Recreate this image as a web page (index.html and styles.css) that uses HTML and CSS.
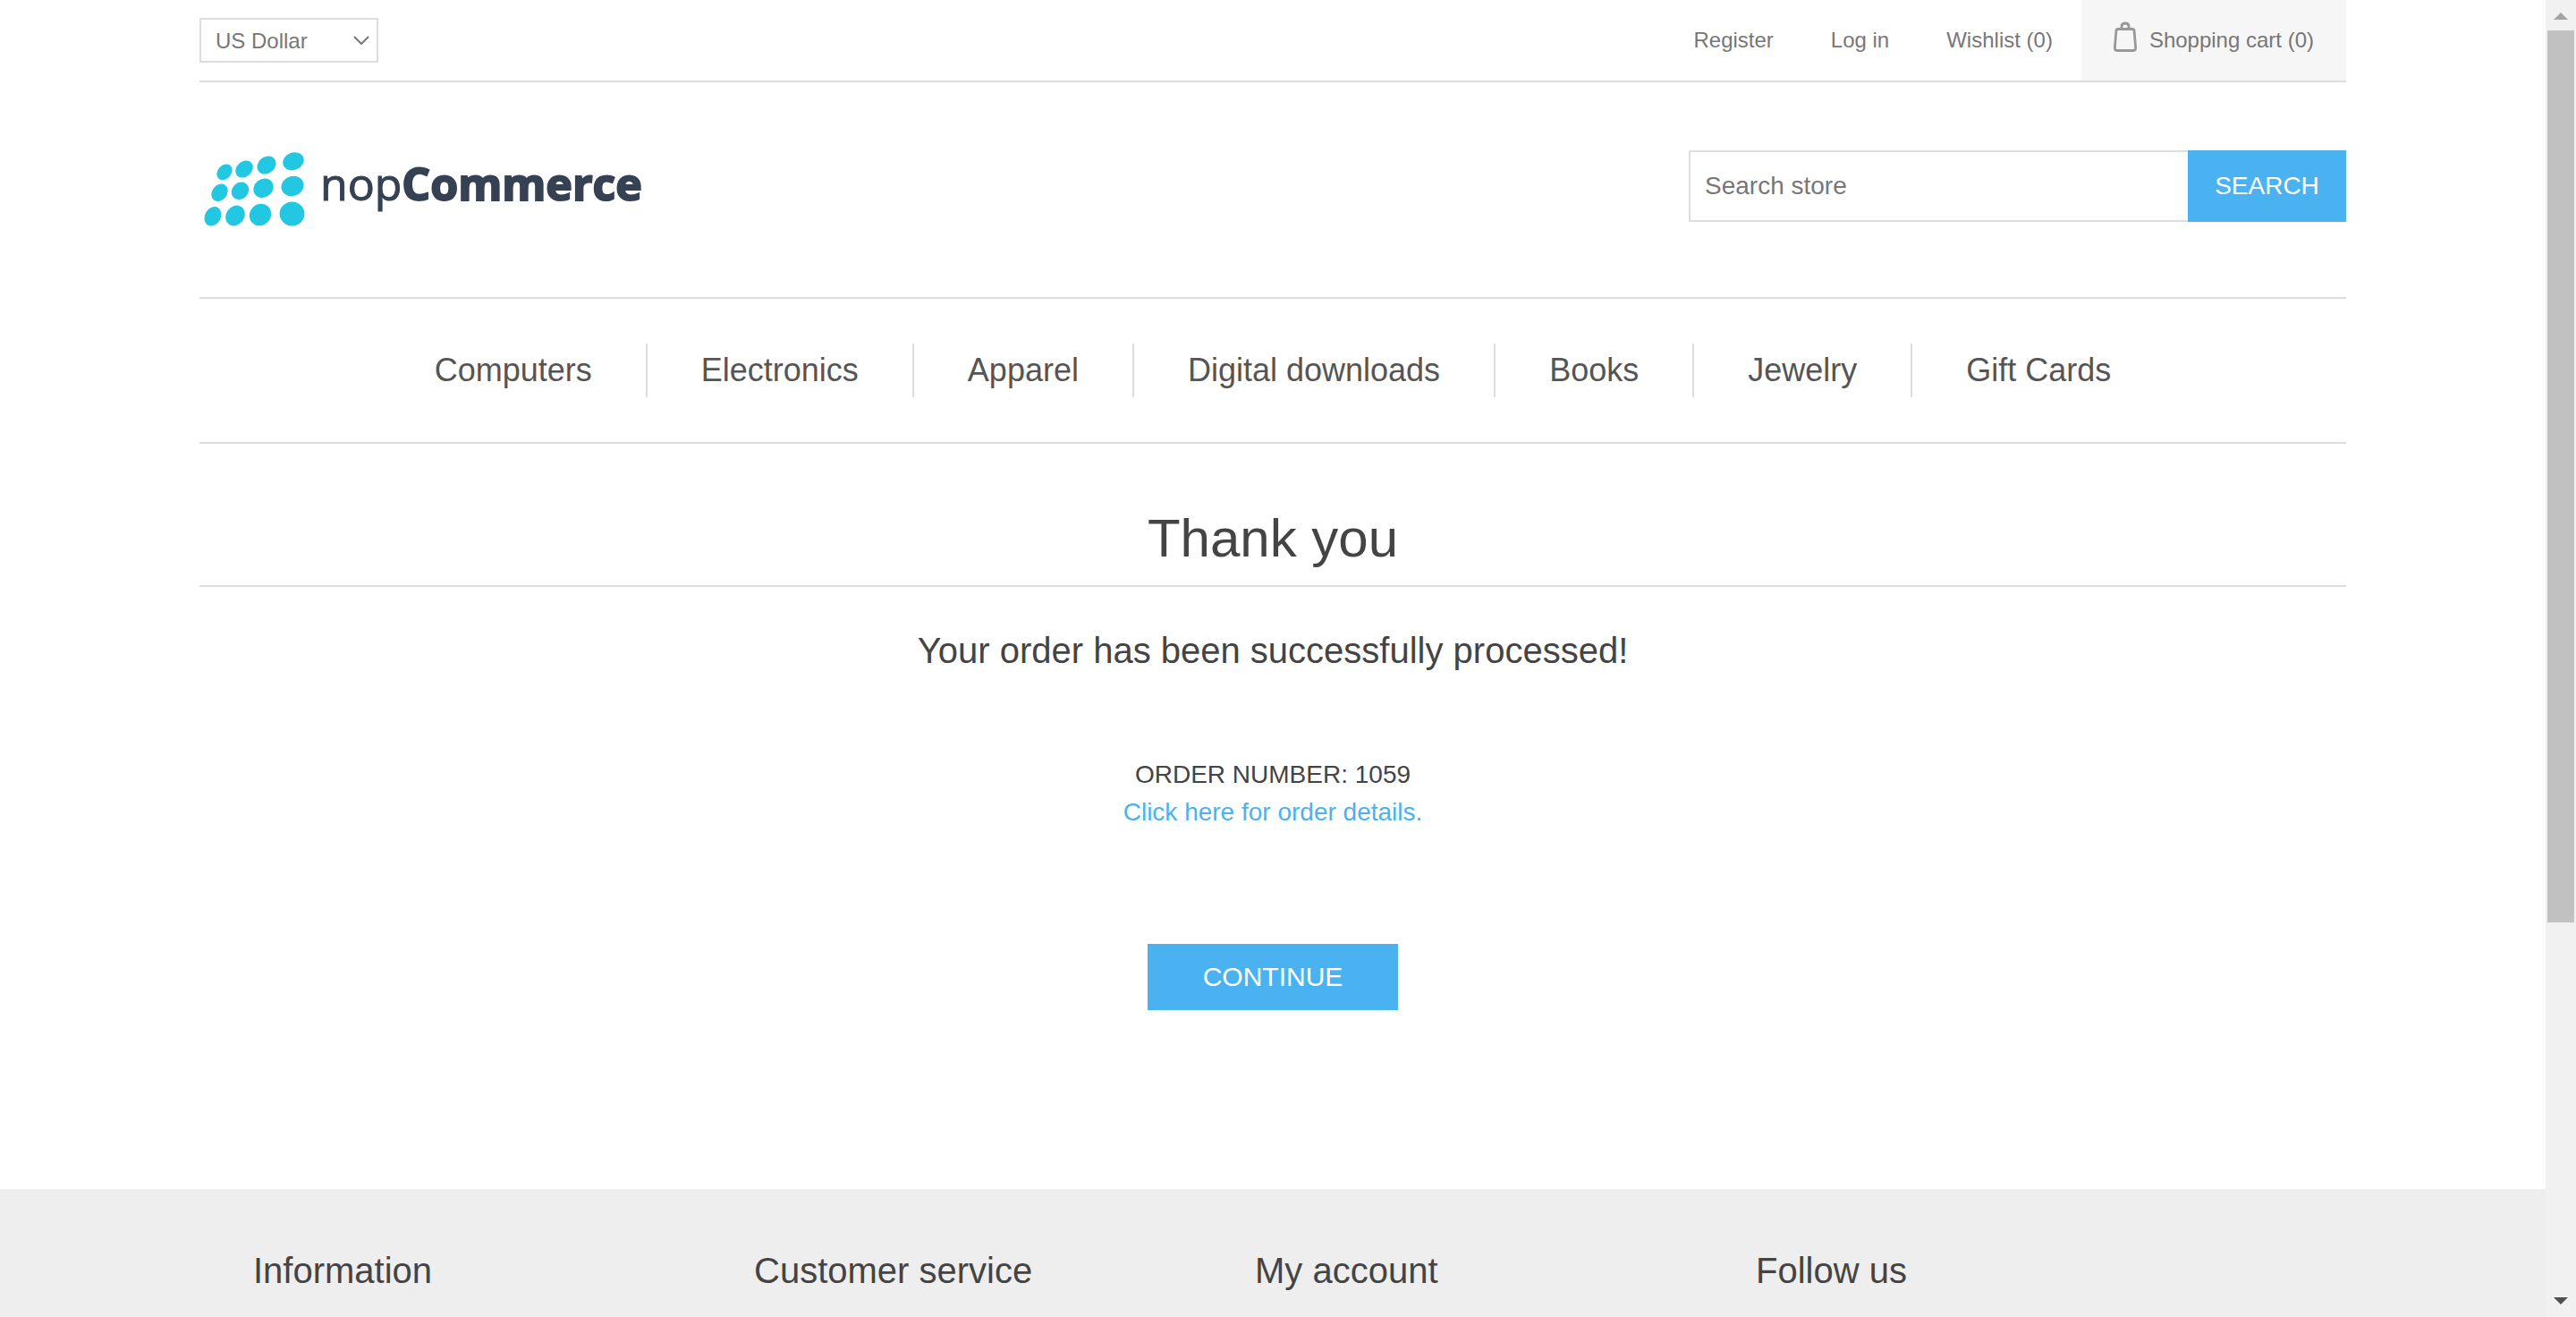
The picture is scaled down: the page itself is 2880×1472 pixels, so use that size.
FILE: index.html
```html
<!DOCTYPE html>
<html lang="en">
<head>
  <meta charset="utf-8">
  <title>nopCommerce - Thank you</title>
  <link rel="stylesheet" href="styles.css">
</head>
<body>
  <div class="page">
    <header class="wrap">
      <div class="topbar">
        <div class="currency">
          <select class="currency-select" aria-label="Currency">
            <option>US Dollar</option>
            <option>Euro</option>
          </select>
          <svg class="currency-arrow" viewBox="0 0 18 10" aria-hidden="true"><path d="M1 1l8 8 8-8" fill="none" stroke="#777" stroke-width="2"/></svg>
        </div>
        <ul class="account-links">
          <li><a class="top-link" href="#">Register</a></li>
          <li><a class="top-link" href="#">Log in</a></li>
          <li><a class="top-link" href="#">Wishlist (0)</a></li>
          <li class="cart">
            <a class="cart-link" href="#">
              <svg class="cart-icon" viewBox="0 0 26 34" aria-hidden="true" fill="none" stroke="#999" stroke-width="2.800">
                <path d="M5 8.500h16q1.900 0 2.100 2l1.500 18.500q.2 3.500-2.500 3.500H3.900q-2.700 0-2.500-3.500L2.900 10.500q.2-2 2.100-2z"/>
                <path d="M9 8V5.500q0-3.500 4-3.500t4 3.500V8"/>
              </svg>
              <span>Shopping cart (0)</span>
            </a>
          </li>
        </ul>
      </div>
      <div class="brand-row">
        <a class="logo" href="#" aria-label="nopCommerce">
          <svg class="logo-art" viewBox="0 0 500 100">
            <g fill="#22c8e2">
              <ellipse cx="28" cy="32.300" rx="9.800" ry="7.500" transform="rotate(-47 28 32.300)"/>
              <ellipse cx="50" cy="29" rx="10.800" ry="8.500" transform="rotate(-42 50 29)"/>
              <ellipse cx="75" cy="24.600" rx="11.200" ry="9.200" transform="rotate(-38 75 24.600)"/>
              <ellipse cx="105" cy="20.300" rx="12" ry="9.700" transform="rotate(-22 105 20.300)"/>
              <ellipse cx="22.500" cy="55.300" rx="10.500" ry="8.300" transform="rotate(-52 22.500 55.300)"/>
              <ellipse cx="45.500" cy="53.300" rx="10.500" ry="9" transform="rotate(-45 45.500 53.300)"/>
              <ellipse cx="71.500" cy="50.300" rx="11.700" ry="10.200" transform="rotate(-38 71.500 50.300)"/>
              <ellipse cx="104" cy="48" rx="12.700" ry="11" transform="rotate(-20 104 48)"/>
              <ellipse cx="15" cy="81.700" rx="11.300" ry="8.900" transform="rotate(-60 15 81.700)"/>
              <ellipse cx="40" cy="81" rx="12" ry="10.200" transform="rotate(-55 40 81)"/>
              <ellipse cx="68" cy="80" rx="12.700" ry="11.700" transform="rotate(-48 68 80)"/>
              <ellipse cx="103.500" cy="79" rx="13.900" ry="13.500"/>
            </g>
            <text class="logo-text" x="135" y="64">nop<tspan class="logo-bold">Commerce</tspan></text>
          </svg>
        </a>
        <form class="search">
          <input class="search-box" type="text" placeholder="Search store" aria-label="Search store">
          <button class="search-button" type="button">SEARCH</button>
        </form>
      </div>
      <nav class="menu">
        <a class="menu-link" href="#">Computers</a>
        <a class="menu-link" href="#">Electronics</a>
        <a class="menu-link" href="#">Apparel</a>
        <a class="menu-link" href="#">Digital downloads</a>
        <a class="menu-link" href="#">Books</a>
        <a class="menu-link" href="#">Jewelry</a>
        <a class="menu-link" href="#">Gift Cards</a>
      </nav>
    </header>
    <main class="wrap order">
      <h1 class="page-title">Thank you</h1>
      <h2 class="message">Your order has been successfully processed!</h2>
      <div class="details">
        <div>ORDER NUMBER: 1059</div>
        <a class="details-link" href="#">Click here for order details.</a>
      </div>
      <button class="continue" type="button">CONTINUE</button>
    </main>
    <footer class="footer">
      <div class="wrap footer-columns">
        <h3 class="footer-title">Information</h3>
        <h3 class="footer-title">Customer service</h3>
        <h3 class="footer-title">My account</h3>
        <h3 class="footer-title">Follow us</h3>
      </div>
    </footer>
  </div>
  <div class="scrollbar" aria-hidden="true">
    <svg class="scroll-arrow" viewBox="0 0 34 34"><path d="M17 14l8 8H9z" fill="#a3a3a3"/></svg>
    <div class="track"><div class="thumb"></div></div>
    <svg class="scroll-arrow" viewBox="0 0 34 34"><path d="M17 20l8-8H9z" fill="#505050"/></svg>
  </div>
</body>
</html>
```
FILE: styles.css
```css
* {
  box-sizing: border-box;
}

body {
  margin: 0;
  height: 100vh;
  display: flex;
  overflow: hidden;
  background: #fff;
  color: #444;
  font-family: "Liberation Sans", Arial, sans-serif;
  font-size: 28px;
}

a {
  color: inherit;
  text-decoration: none;
}

button,
input,
select {
  font-family: inherit;
  border-radius: 0;
}

.page {
  flex: 1;
  min-width: 0;
  display: flex;
  flex-direction: column;
  overflow: hidden;
}

.wrap {
  width: 100%;
  max-width: 2400px;
  margin: 0 auto;
}

/* top bar */
.topbar {
  display: flex;
  justify-content: space-between;
  align-items: center;
  height: 92px;
  border-bottom: 2px solid #ddd;
  color: #777;
  font-size: 24px;
}

.currency {
  display: grid;
  align-items: center;
  width: 200px;
}

.currency-select {
  grid-area: 1 / 1;
  appearance: none;
  height: 50px;
  padding: 0 16px;
  border: 2px solid #ddd;
  background: #fff;
  color: #777;
  font-size: 24px;
}

.currency-arrow {
  grid-area: 1 / 1;
  justify-self: end;
  width: 18px;
  height: 10px;
  margin-right: 10px;
  pointer-events: none;
}

.account-links {
  display: flex;
  align-items: stretch;
  height: 100%;
  margin: 0;
  padding: 0;
  list-style: none;
}

.top-link {
  display: flex;
  align-items: center;
  height: 100%;
  padding: 0 32px;
}

.cart {
  background: #f6f6f6;
}

.cart-link {
  display: flex;
  align-items: center;
  gap: 14px;
  height: 100%;
  padding: 0 36px;
}

.cart-icon {
  width: 26px;
  height: 34px;
  margin-bottom: 8px;
}

/* logo and search */
.brand-row {
  display: flex;
  justify-content: space-between;
  align-items: flex-start;
  padding: 68px 0 72px;
  border-bottom: 2px solid #ddd;
}

.logo,
.logo-art {
  display: block;
  width: 500px;
  height: 100px;
}

.logo-text {
  fill: #364153;
  stroke: #364153;
  stroke-width: 1px;
  font-family: "Open Sans", sans-serif;
  font-size: 50px;
}

.logo-bold {
  stroke-width: 2px;
  font-weight: 700;
}

.search {
  display: flex;
  align-self: center;
  width: 735px;
  height: 80px;
  margin-bottom: 4px;
}

.search-box {
  flex: 1;
  min-width: 0;
  padding: 0 16px;
  border: 2px solid #ddd;
  border-right: 0;
  font-size: 28px;
  color: #777;
}

.search-box::placeholder {
  color: #777;
}

.search-button {
  width: 177px;
  padding: 0;
  border: 0;
  background: #4ab2f1;
  color: #fff;
  font-size: 28px;
}

/* category menu */
.menu {
  display: flex;
  justify-content: center;
  padding: 50px 0;
  border-bottom: 2px solid #ddd;
  color: #555;
  font-size: 36px;
  line-height: 60px;
}

.menu-link {
  padding: 0 60px;
}

.menu-link + .menu-link {
  border-left: 2px solid #ddd;
}

/* order confirmation */
.order {
  padding-bottom: 200px;
  text-align: center;
}

.page-title {
  margin: 0 0 46px;
  padding: 71px 0 17px;
  border-bottom: 2px solid #ddd;
  font-size: 60px;
  font-weight: 400;
  line-height: 70px;
}

.message {
  margin: 0 0 93px;
  font-size: 40px;
  font-weight: 400;
  line-height: 50px;
}

.details {
  margin-bottom: 126px;
  line-height: 42px;
}

.details-link {
  color: #4ab2f1;
}

.continue {
  display: block;
  width: 280px;
  height: 74px;
  margin: 0 auto;
  padding: 0;
  border: 0;
  background: #4ab2f1;
  color: #fff;
  font-size: 30px;
}

/* footer */
.footer {
  flex: 1 0 auto;
  background: #eee;
}

.footer-columns {
  display: grid;
  grid-template-columns: repeat(4, 1fr);
  padding: 66px 100px 0 60px;
}

.footer-title {
  margin: 0;
  font-size: 40px;
  font-weight: 400;
  line-height: 50px;
}

/* scroll bar */
.scrollbar {
  flex: none;
  display: flex;
  flex-direction: column;
  width: 34px;
  background: #f1f1f1;
}

.scroll-arrow {
  display: block;
  width: 34px;
  height: 34px;
}

.track {
  flex: 1;
  padding: 0 2px;
}

.thumb {
  height: 71%;
  background: #c1c1c1;
}
```
